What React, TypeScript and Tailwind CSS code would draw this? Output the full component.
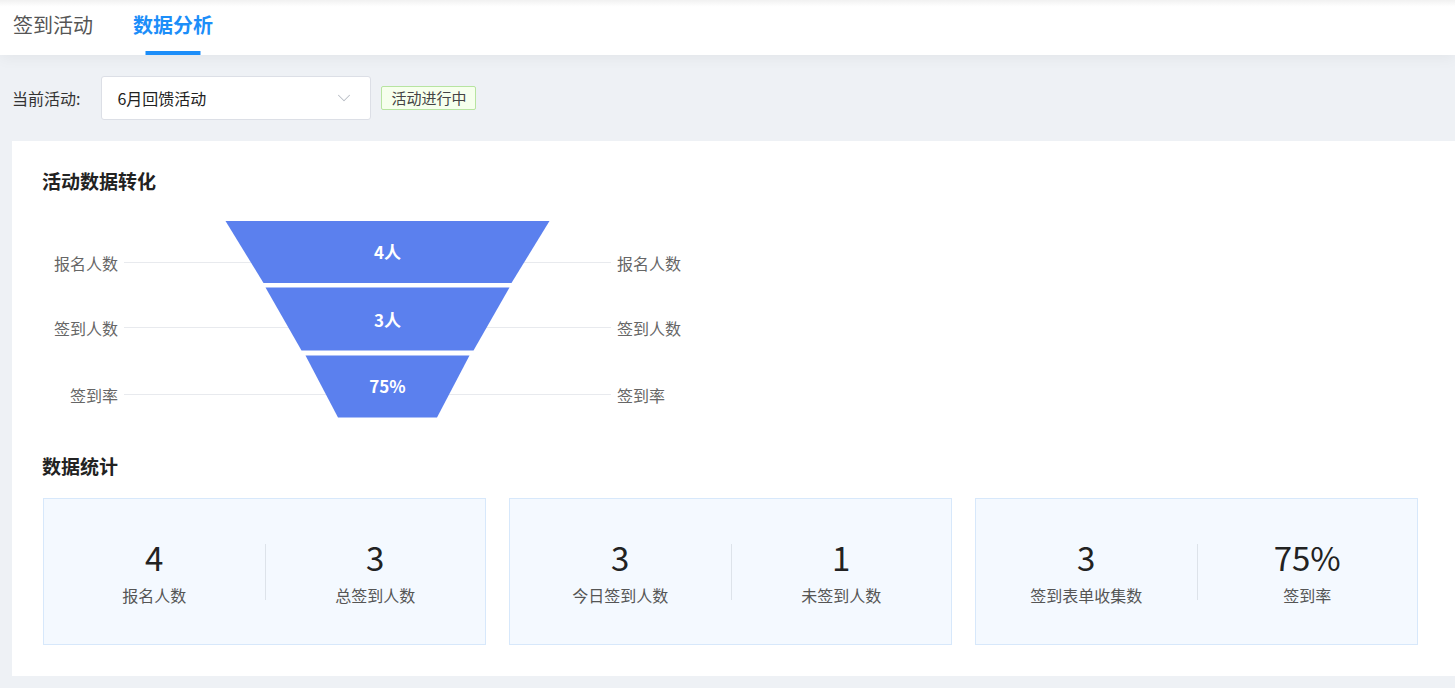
import { ChevronDown } from "lucide-react"

const funnel = [
  { label: "报名人数", value: "4人", top: 10, bottom: 72, tw: 162, bw: 124, line: 51.5, ty: 43 },
  { label: "签到人数", value: "3人", top: 76.5, bottom: 139.5, tw: 122, bw: 86, line: 116.5, ty: 111 },
  { label: "签到率", value: "75%", top: 144.5, bottom: 206.5, tw: 82, bw: 49.5, line: 183.5, ty: 177 },
]

const stats = [
  [
    { value: "4", label: "报名人数" },
    { value: "3", label: "总签到人数" },
  ],
  [
    { value: "3", label: "今日签到人数" },
    { value: "1", label: "未签到人数" },
  ],
  [
    { value: "3", label: "签到表单收集数" },
    { value: "75%", label: "签到率" },
  ],
]

function FunnelChart() {
  const cx = 345.5
  return (
    <svg width="660" height="215" className="block">
      {funnel.map(f => (
        <g key={f.label}>
          <line x1={82} x2={569} y1={f.line} y2={f.line} stroke="#e8eaee" strokeWidth={1} />
          <text x={76} y={f.line + 3} textAnchor="end" dominantBaseline="middle" fontSize={16} fill="#666">{f.label}</text>
          <text x={575} y={f.line + 3} dominantBaseline="middle" fontSize={16} fill="#666">{f.label}</text>
        </g>
      ))}
      {funnel.map(f => (
        <g key={f.value}>
          <polygon
            points={`${cx - f.tw},${f.top} ${cx + f.tw},${f.top} ${cx + f.bw},${f.bottom} ${cx - f.bw},${f.bottom}`}
            fill="#5b80ee"
          />
          <text x={cx} y={f.ty} textAnchor="middle" dominantBaseline="middle" fontSize={17} fontWeight={700} fill="#fff">{f.value}</text>
        </g>
      ))}
    </svg>
  )
}

export default function App() {
  return (
    <div className="min-h-[688px] bg-[#eef1f5] font-['Noto_Sans_CJK_SC','Noto_Sans',sans-serif] text-[#333]">
      <header className="relative z-10 h-[55px] bg-linear-to-b from-[#f1f1f1] to-white to-[12%] shadow-[0_3px_14px_rgba(0,0,0,0.05)] flex items-stretch pl-[13px] gap-[40px]">
        <div className="flex items-center pb-[5px] text-[20px] text-[#555]">签到活动</div>
        <div className="relative flex items-center pb-[5px] text-[20px] font-bold text-[#1c8ef9]">
          数据分析
          <span className="absolute bottom-0 left-1/2 -translate-x-1/2 w-[55px] h-[4px] bg-[#1c8ef9]" />
        </div>
      </header>

      <div className="flex items-center pl-[12px] pt-[21px] pb-[21px]">
        <span className="text-[16px] text-[#333] mr-[21px]">当前活动:</span>
        <div className="w-[270px] h-[44px] bg-white border border-[#dcdfe6] rounded-[3px] flex items-center justify-between pl-[15px] pr-[15px]">
          <span className="text-[16px] text-[#222]">6月回馈活动</span>
          <ChevronDown size={22} strokeWidth={1.1} color="#b8bcc4" />
        </div>
        <span className="ml-[10px] h-[24px] px-[9px] flex items-center border border-[#b7e4a0] bg-[#f6ffed] rounded-[2px] text-[15px] text-[#444]">
          活动进行中
        </span>
      </div>

      <section className="ml-[12px] bg-white pt-[27px] pl-[30px] pb-[31px]">
        <h2 className="text-[19px] leading-[26px] font-bold text-[#222]">活动数据转化</h2>
        <div className="mt-[17px]">
          <FunnelChart />
        </div>
        <h2 className="mt-[27px] text-[19px] leading-[26px] font-bold text-[#222]">数据统计</h2>
        <div className="mt-[19px] ml-[1px] w-[1375px] grid grid-cols-3 gap-[23px]">
          {stats.map((pair, i) => (
            <div key={i} className="h-[147px] bg-[#f4f9ff] border border-[#d7e8fb] flex items-center">
              {pair.map((s, j) => (
                <div key={s.label} className="flex-1 flex items-center">
                  {j === 1 && <div className="w-px h-[56px] bg-[#dde3ea]" />}
                  <div className="flex-1 flex flex-col items-center">
                    <span className="text-[33px] leading-[40px] text-[#222]">{s.value}</span>
                    <span className="mt-[6px] text-[16px] leading-[24px] text-[#555]">{s.label}</span>
                  </div>
                </div>
              ))}
            </div>
          ))}
        </div>
      </section>
    </div>
  )
}
